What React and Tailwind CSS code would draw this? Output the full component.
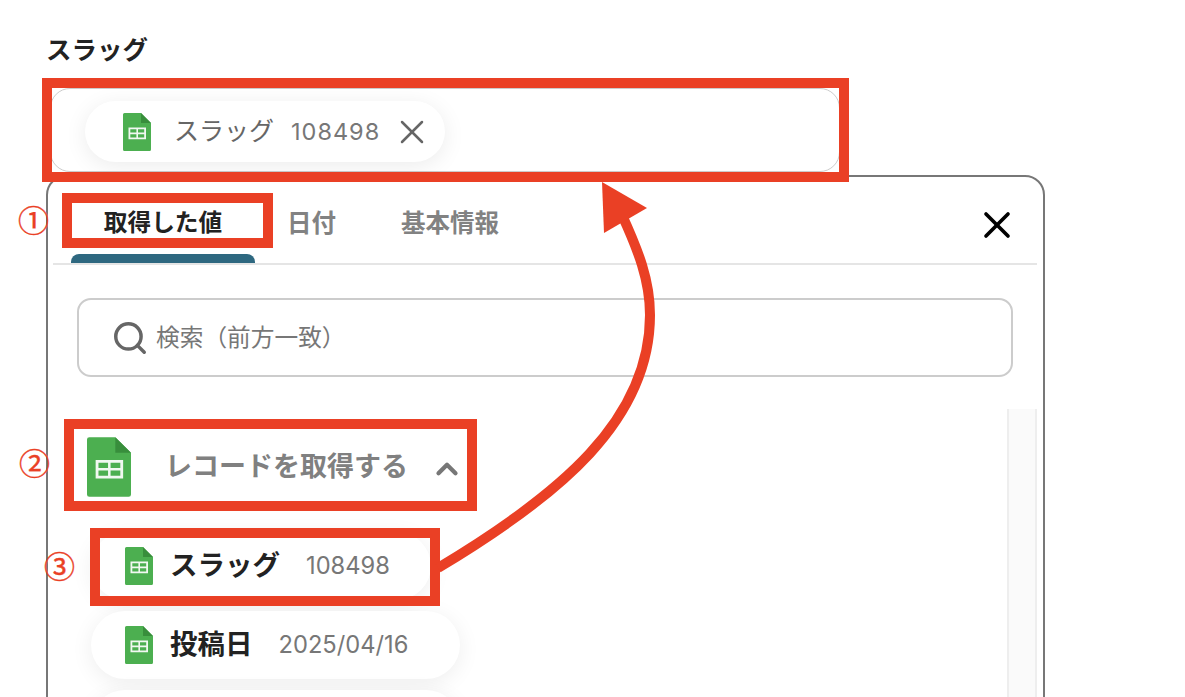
import React from 'react';
import { X, Search, ChevronUp } from 'lucide-react';

const SheetIcon = ({ className }) => (
  <svg viewBox="0 0 28 38" className={className}>
    <path d="M1.5 0H18L28 10V36.5a1.5 1.5 0 0 1-1.5 1.5H1.5A1.5 1.5 0 0 1 0 36.5V1.5A1.5 1.5 0 0 1 1.5 0Z" fill="#4caf50" />
    <path d="M18 0L28 10H18Z" fill="#388e3c" />
    <path d="M5.5 14.5H23V26.3H5.5ZM7.3 16.3V19.6H13.4V16.3ZM15 16.3V19.6H21.2V16.3ZM7.3 21.2V24.5H13.4V21.2ZM15 21.2V24.5H21.2V21.2Z" fill="#f1f8f1" fillRule="evenodd" />
  </svg>
);

const RedBox = ({ className }) => (
  <div className={`absolute border-[10px] border-[#ea4025] ${className}`} />
);

const Num = ({ className, children }) => (
  <span className={`absolute font-['Noto_Sans_CJK_JP'] text-[31px] leading-none text-[#ea4025] [-webkit-text-stroke:0.4px_#ea4025] ${className}`}>{children}</span>
);

const ListChip = ({ name, value, width }) => (
  <div className={`flex h-[68px] items-center rounded-[34px] bg-white pl-[34px] shadow-[0_4px_22px_rgba(0,0,0,0.07)] ${width}`}>
    <SheetIcon className="h-[38px] w-[28px]" />
    <span className="ml-[17px] text-[27.5px] font-bold text-[#222]">{name}</span>
    <span className="ml-[26px] text-[23.7px] text-[#777]">{value}</span>
  </div>
);

export default function App() {
  return (
    <div
      className="relative h-[697px] w-full overflow-hidden bg-white pl-[46px] pt-[32px]"
      style={{ fontFamily: 'Inter, "Noto Sans CJK JP", sans-serif' }}
    >
      <h2 className="h-[36px] text-[25.5px] font-bold leading-[36px] text-[#222]">スラッグ</h2>

      {/* input with selected value */}
      <div className="ml-[4px] mt-[20px] flex h-[84px] w-[790px] items-center rounded-[20px] border border-[#ccc] bg-white pl-[34px] pt-[3px]">
        <div className="flex h-[61px] w-[360px] items-center rounded-[31px] bg-white pl-[38px] shadow-[0_4px_22px_rgba(0,0,0,0.08)]">
          <SheetIcon className="h-[38px] w-[28px]" />
          <span className="ml-[23px] text-[25px] text-[#666]">スラッグ</span>
          <span className="ml-[17px] text-[23.5px] tracking-[1px] text-[#777]">108498</span>
          <X className="ml-[12px] h-[40px] w-[40px] text-[#666]" strokeWidth={1.5} />
        </div>
      </div>

      {/* picker panel */}
      <div className="mt-[3px] h-[560px] w-[999px] rounded-[20px] border-2 border-[#777] bg-white pl-[5px] pr-[6px]">
        <div className="relative flex h-[88px] border-b-2 border-[#e5e5e5] pl-[18px]">
          <div className="flex h-full w-[184px] flex-col items-center justify-end">
            <span className="mb-[14px] text-[23.7px] font-bold leading-[34px] text-[#222]">取得した値</span>
            <div className="h-[9px] w-full rounded-t-[8px] bg-[#2e6880]" />
          </div>
          <span className="ml-[32px] mt-[29px] text-[24.5px] font-bold leading-[34px] text-[#828282]">日付</span>
          <span className="ml-[65px] mt-[29px] text-[24.5px] font-bold leading-[34px] text-[#828282]">基本情報</span>
          <X className="ml-auto mr-[18px] mt-[26px] h-[44px] w-[44px] text-black" strokeWidth={2} />
        </div>

        <div className="ml-[24px] mt-[33px] flex h-[79px] w-[936px] items-center rounded-[14px] border-2 border-[#ccc] pl-[32px]">
          <Search className="h-[38px] w-[38px] text-[#666]" strokeWidth={2.2} />
          <span className="ml-[7px] text-[23.7px] text-[#777]">検索（前方一致）</span>
        </div>

        <div className="mt-[32px] flex">
          <div className="flex-1 pl-[34px] pt-[28px]">
            <div className="flex h-[60px] items-center">
              <SheetIcon className="h-[60px] w-[44px]" />
              <span className="ml-[34px] text-[27px] font-bold text-[#808080]">レコードを取得する</span>
              <ChevronUp className="ml-[22px] mt-[4px] h-[34px] w-[34px] text-[#777]" strokeWidth={3} />
            </div>
            <div className="ml-[4px] mt-[35px] flex flex-col gap-[11px]">
              <ListChip name="スラッグ" value="108498" width="w-[340px]" />
              <ListChip name="投稿日" value="2025/04/16" width="w-[369px]" />
              <ListChip name="" value="" width="w-[369px]" />
            </div>
          </div>
          <div className="h-[300px] w-[30px] border-x-2 border-[#eee] bg-[#fafafa]" />
        </div>
      </div>

      {/* annotations */}
      <RedBox className="left-[42px] top-[78px] h-[104px] w-[807px]" />
      <RedBox className="left-[62px] top-[193px] h-[55px] w-[211px]" />
      <RedBox className="left-[64px] top-[419px] h-[92px] w-[413px]" />
      <RedBox className="left-[90px] top-[528px] h-[78px] w-[350px]" />
      <Num className="left-[18px] top-[203px]">①</Num>
      <Num className="left-[19px] top-[446px]">②</Num>
      <Num className="left-[44px] top-[549px]">③</Num>
      <svg className="absolute left-0 top-0 h-[697px] w-[1185px]" viewBox="0 0 1185 697" fill="none">
        <path d="M438 568C560 495 650 420 650 315C650 280 638 250 622 215" stroke="#ea4025" strokeWidth="10" />
        <path d="M602 182L647 208L604 233Z" fill="#ea4025" />
      </svg>
    </div>
  );
}
